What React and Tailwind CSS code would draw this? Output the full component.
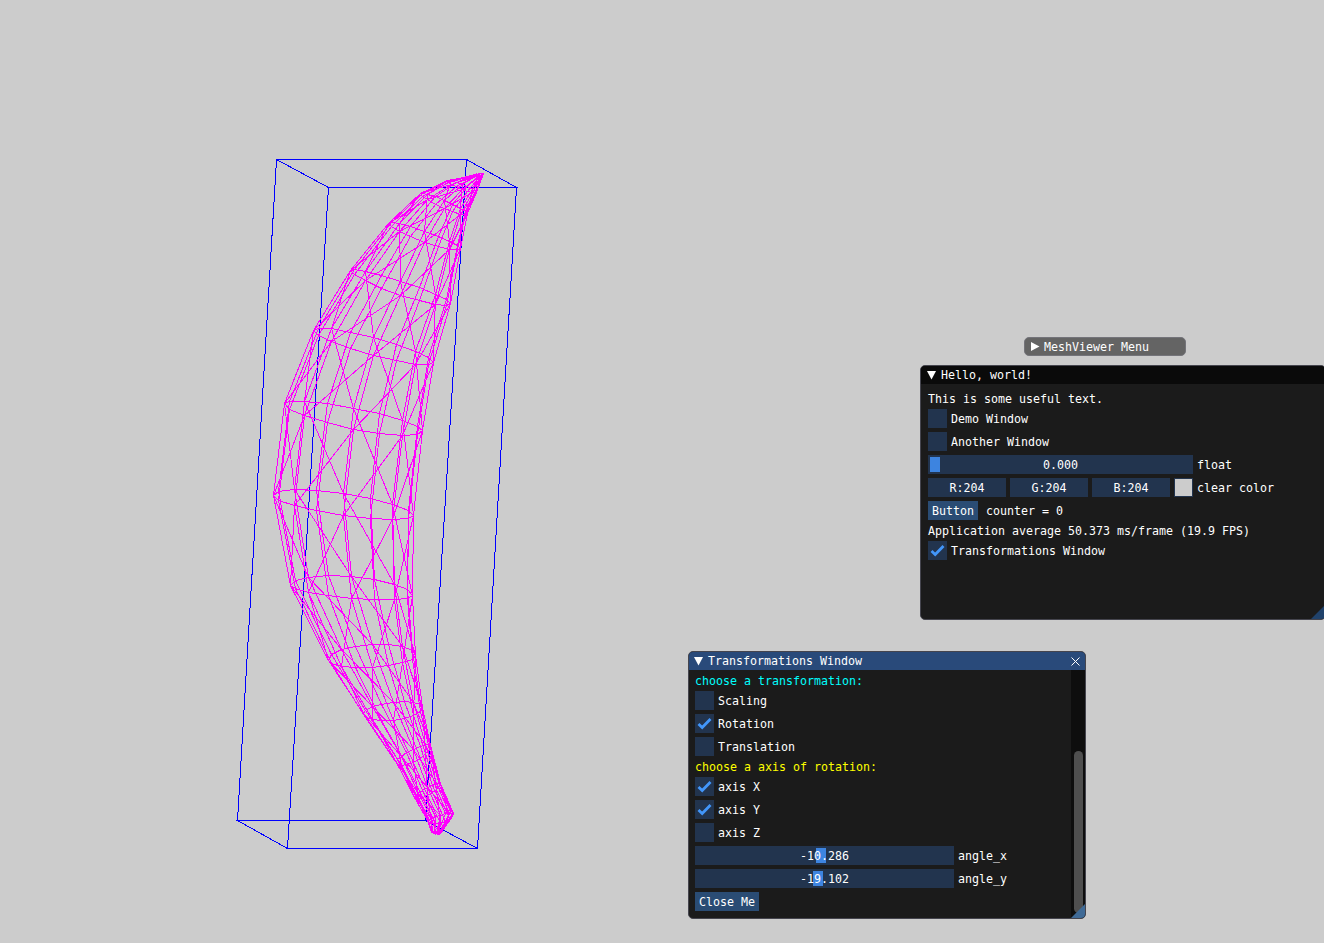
// wireframe mesh: rings [Lx, Ly, Rx, Ry, up, down], top to bottom
const rings = [
    [474, 175, 483, 173, 1, 1],
    [447, 180, 476, 192, 2, 3],
    [420, 193, 467, 213, 3, 5],
    [388, 223, 460, 248, 5, 6],
    [350, 270, 450, 303, 6, 8],
    [313, 330, 433, 362, 9, 9],
    [284, 403, 422, 430, 9, 12],
    [273, 495, 413, 515, 12, 10],
    [290, 585, 412, 595, 14, 8],
    [328, 660, 415, 655, 14, 9],
    [363, 713, 422, 707, 8, 10],
    [396, 762, 430, 745, 5, 8],
    [414, 797, 440, 783, 3, 5],
    [427, 820, 453, 813, 2, 6],
    [431, 832, 440, 833, 0, 1],
]
const N = 16

function ringPoint(r, j) {
    const a = (2 * Math.PI * j) / N
    const t = (1 - Math.cos(a)) / 2
    const s = Math.sin(a)
    const x = r[0] + (r[2] - r[0]) * t
    const y = r[1] + (r[3] - r[1]) * t + (s > 0 ? -r[4] * s : -r[5] * s)
    return [Math.round(x) + 0.5, Math.round(y) + 0.5]
}

function buildMesh() {
    let d = ''
    rings.forEach((r, i) => {
        for (let j = 0; j < N; j++) {
            const p = ringPoint(r, j)
            const q = ringPoint(r, j + 1)
            d += `M${p[0]} ${p[1]}L${q[0]} ${q[1]}`
            if (i < rings.length - 1) {
                const n = ringPoint(rings[i + 1], j)
                d += `M${p[0]} ${p[1]}L${n[0]} ${n[1]}`
                if (j % 2 === 0) {
                    const m = ringPoint(rings[i + 1], j + 2)
                    d += `M${p[0]} ${p[1]}L${m[0]} ${m[1]}`
                }
            }
        }
    })
    return d
}

const boxPath = 'M276.5 159.5H466.5L516.5 187.5H328.5ZM237.5 820.5H425.5L477.5 848.5H287.5ZM276.5 159.5L237.5 820.5M466.5 159.5L425.5 820.5M516.5 187.5L477.5 848.5M328.5 187.5L287.5 848.5'

function Mesh() {
    return (
        <svg width="1324" height="943" className="absolute left-0 top-0" shapeRendering="crispEdges" fill="none">
            <path d={boxPath} stroke="#0000ff" />
            <path d={buildMesh()} stroke="#ff00ff" />
        </svg>
    )
}

function Arrow({ open }) {
    return (
        <svg width="9" height="9" viewBox="0 0 9 9" className="shrink-0" fill="#ffffff">
            {open ? <polygon points="0,0 9,0 4.5,8.5" /> : <polygon points="0,0 8.5,4.5 0,9" />}
        </svg>
    )
}

function Checkbox({ label, checked }) {
    return (
        <div className="flex items-center h-[19px]">
            <div className="w-[19px] h-[19px] bg-[#22344e] shrink-0">
                {checked && (
                    <svg width="19" height="19" viewBox="0 0 19 19" fill="none">
                        <path d="M3.5 10L7.2 13.5L15.5 5" stroke="#4296fa" strokeWidth="2.8" />
                    </svg>
                )}
            </div>
            <span className="ml-1 pt-[2px]">{label}</span>
        </div>
    )
}

function Slider({ value, label, width, grab }) {
    return (
        <div className="flex items-center h-[19px]">
            <div className={`relative h-[19px] bg-[#22344e] flex items-center justify-center ${width}`}>
                <div className={`absolute top-[2px] w-[10px] h-[15px] bg-[#3d84e0] ${grab}`} />
                <span className="relative pt-[2px]">{value}</span>
            </div>
            <span className="ml-1 pt-[2px]">{label}</span>
        </div>
    )
}

function Button({ children, width }) {
    return <div className={`h-[19px] pt-[2px] bg-[#2a4c74] flex items-center justify-center shrink-0 ${width}`}>{children}</div>
}

function ColorField({ children }) {
    return <div className="w-[78px] h-[19px] pt-[2px] bg-[#22344e] flex items-center justify-center">{children}</div>
}

function HelloWindow() {
    return (
        <div className="absolute left-[920px] top-[365px] w-[406px] h-[255px] bg-[#1b1b1b] border border-[#45454e] rounded-[5px] overflow-hidden">
            <div className="h-[18px] bg-[#0a0a0a] flex items-center pl-[6px]">
                <Arrow open />
                <span className="ml-[5px]">Hello, world!</span>
            </div>
            <div className="flex flex-col gap-1 pl-[7px] pt-2">
                <div className="h-[13px] pt-px">This is some useful text.</div>
                <Checkbox label="Demo Window" />
                <Checkbox label="Another Window" />
                <Slider value="0.000" label="float" width="w-[265px]" grab="left-[2px]" />
                <div className="flex items-center gap-1 h-[19px]">
                    <ColorField>R:204</ColorField>
                    <ColorField>G:204</ColorField>
                    <ColorField>B:204</ColorField>
                    <div className="w-[19px] h-[19px] bg-[#cccccc] border border-[#22344e]" />
                    <span className="pt-[2px]">clear color</span>
                </div>
                <div className="flex items-center h-[19px]">
                    <Button width="w-[50px]">Button</Button>
                    <span className="ml-2 pt-[2px]">counter = 0</span>
                </div>
                <div className="h-[13px] pt-px">Application average 50.373 ms/frame (19.9 FPS)</div>
                <Checkbox label="Transformations Window" checked />
            </div>
            <svg width="13" height="13" className="absolute right-[1px] bottom-0" fill="#20426b">
                <polygon points="13,0 13,13 0,13" />
            </svg>
        </div>
    )
}

function TransformWindow() {
    return (
        <div className="absolute left-[688px] top-[651px] w-[398px] h-[268px] bg-[#1b1b1b] border border-[#45454e] rounded-[5px] overflow-hidden flex flex-col">
            <div className="h-[18px] bg-[#294a7a] flex items-center pl-[5px] pr-[5px] shrink-0">
                <Arrow open />
                <span className="ml-[5px] flex-1">Transformations Window</span>
                <svg width="9" height="9" viewBox="0 0 9 9" stroke="#ffffff" fill="none">
                    <path d="M0.5 0.5L8.5 8.5M8.5 0.5L0.5 8.5" />
                </svg>
            </div>
            <div className="flex flex-1 min-h-0">
                <div className="flex-1 flex flex-col gap-1 pl-[6px] pt-1">
                    <div className="h-[13px] pt-px text-[#00ffff]">choose a transformation:</div>
                    <Checkbox label="Scaling" />
                    <Checkbox label="Rotation" checked />
                    <Checkbox label="Translation" />
                    <div className="h-[13px] pt-px text-[#ffff00]">choose a axis of rotation:</div>
                    <Checkbox label="axis X" checked />
                    <Checkbox label="axis Y" checked />
                    <Checkbox label="axis Z" />
                    <Slider value="-10.286" label="angle_x" width="w-[259px]" grab="left-[121px]" />
                    <Slider value="-19.102" label="angle_y" width="w-[259px]" grab="left-[118px]" />
                    <Button width="w-[64px]">Close Me</Button>
                </div>
                <div className="w-[14px] bg-[#0e0e0e] shrink-0 pt-[81px] pl-[3px]">
                    <div className="w-[9px] h-[162px] bg-[#4f4f4f] rounded-[5px]" />
                </div>
            </div>
            <svg width="14" height="14" className="absolute right-0 bottom-0" fill="#3f6a96">
                <polygon points="14,0 14,14 0,14" />
            </svg>
        </div>
    )
}

export default function App() {
    return (
        <div className="relative w-[1324px] h-[943px] overflow-hidden bg-[#cccccc] text-white text-[11.63px] leading-[13px] font-['DejaVu_Sans_Mono',monospace]">
            <Mesh />
            <div className="absolute left-[1024px] top-[337px] w-[162px] h-[19px] pt-[2px] bg-[#646464] border border-[#74747a] rounded-[5px] flex items-center pl-[6px]">
                <div className="-mt-[2px]">
                    <Arrow />
                </div>
                <span className="ml-[4px]">MeshViewer Menu</span>
            </div>
            <HelloWindow />
            <TransformWindow />
        </div>
    )
}
